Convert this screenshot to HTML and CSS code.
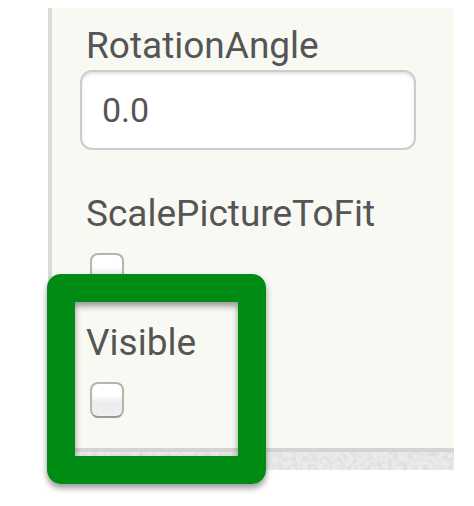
FILE: index.html
```
<!DOCTYPE html>
<html lang="en">
<head>
<meta charset="utf-8">
<title>Properties</title>
<link rel="stylesheet" href="styles.css">
</head>
<body>
<main class="viewport">
  <form class="panel">
    <div class="property">
      <label class="name" for="rotation">RotationAngle</label>
      <input class="text-box" id="rotation" type="text" value="0.0">
    </div>
    <div class="property">
      <label class="name" for="scale">ScalePictureToFit</label>
      <input class="check" id="scale" type="checkbox">
    </div>
    <div class="property visible">
      <label class="name" for="visible">Visible</label>
      <input class="check" id="visible" type="checkbox">
      <div class="highlight"></div>
    </div>
  </form>
  <svg class="texture" aria-hidden="true">
    <filter id="grain" x="0" y="0" width="100%" height="100%">
      <feTurbulence type="fractalNoise" baseFrequency="0.2" numOctaves="2" seed="4"/>
      <feColorMatrix values="0 0 0 0 0.55  0 0 0 0 0.55  0 0 0 0 0.55  0.9 0 0 0 -0.35"/>
    </filter>
    <rect width="100%" height="100%" filter="url(#grain)"/>
  </svg>
</main>
</body>
</html>
```
FILE: styles.css
```
* {
  box-sizing: border-box;
}

body {
  margin: 0;
  background: #fff;
  color: #555;
  font-family: Roboto, "Liberation Sans", sans-serif;
}

.viewport {
  margin: 8px 20px 36px 48px;
}

.panel {
  padding: 14px 38px 30px 28px;
  background: #f8f9f3;
  border-left: 4px solid #dadada;
  border-bottom: 4px solid #d4d4d4;
}

.property {
  display: flex;
  flex-direction: column;
  align-items: flex-start;
  margin-bottom: 40px;
}

.name {
  margin-left: 6px;
  font-size: 37px;
  line-height: 48px;
}

.text-box {
  width: 100%;
  height: 80px;
  padding: 0 20px;
  border: 2px solid #ccc;
  border-radius: 12px;
  background: #fff;
  box-shadow: inset 0 2px 3px rgba(0, 0, 0, 0.12);
  color: #555;
  font-family: inherit;
  font-size: 34px;
}

.check {
  appearance: none;
  width: 34px;
  height: 36px;
  margin: 15px 0 0 10px;
  border: 2px solid #b4b4b0;
  border-bottom-color: #999;
  border-radius: 8px;
  background: linear-gradient(#fff 35%, #ebebeb 60%, #f0f0f0);
}

.visible {
  position: relative;
  margin: -10px 0 0;
}

.highlight {
  position: absolute;
  top: -45px;
  left: -33px;
  width: 219px;
  height: 210px;
  border: 28px solid #008c14;
  border-radius: 14px;
  box-shadow: 0 4px 6px rgba(0, 0, 0, 0.4), inset 0 4px 6px rgba(0, 0, 0, 0.4);
  pointer-events: none;
}

.texture {
  display: block;
  width: 100%;
  height: 18px;
  background: #ebebeb;
}
```
